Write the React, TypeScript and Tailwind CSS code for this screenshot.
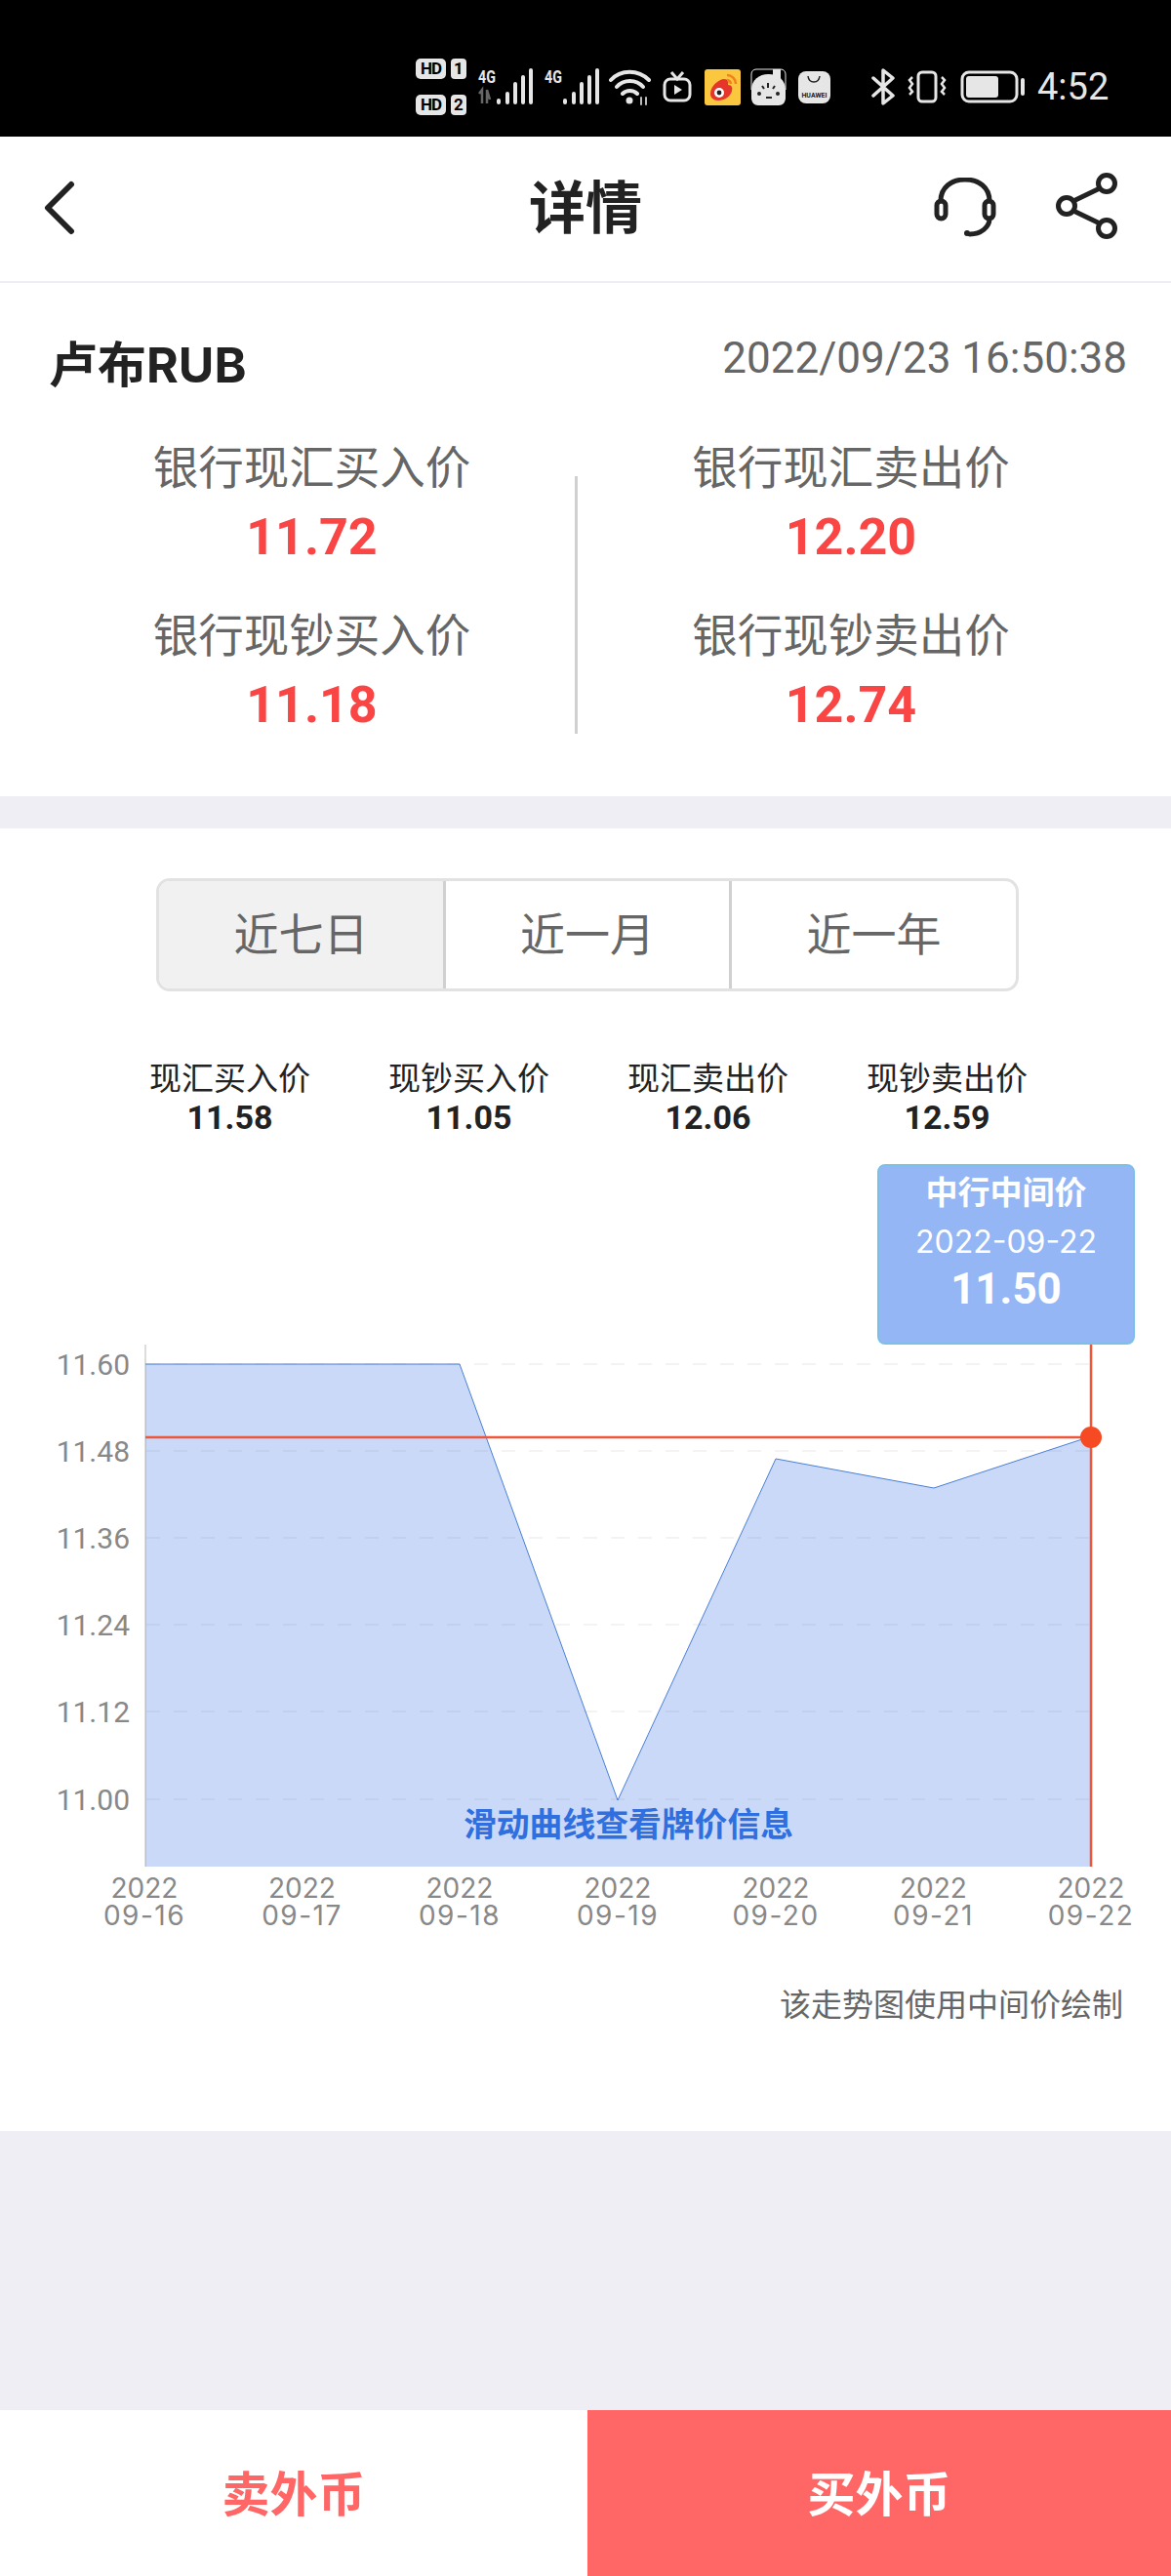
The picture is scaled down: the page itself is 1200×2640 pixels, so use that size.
import React from "react";

const Bars = ({ arrows }: { arrows?: boolean }) => (
  <div className="relative w-[56px] h-[38px]">
    <span className="absolute left-0 top-[1px] text-[19px] leading-[16px] font-bold text-[#e6e6e6] scale-x-75 origin-left">4G</span>
    <svg width="56" height="38" viewBox="0 0 56 38" className="absolute left-0 top-0">
      {arrows && <path d="M4 22v14M1 26l3-4v14M9 36V22l3 10" stroke="#666" strokeWidth="2.500" fill="none" />}
      <g stroke="#e6e6e6" strokeWidth="4" strokeLinecap="round">
        <path d="M21 33v2M30 26v9M38 16v19M46 9v26M54 2v33" />
      </g>
    </svg>
  </div>
);

const Hd = ({ n }: { n: string }) => (
  <div className="flex items-center gap-[5px]">
    <span className="w-[31px] h-[21px] rounded-[5px] bg-[#e6e6e6] text-black text-[17px] leading-[21px] font-bold text-center tracking-[-1px]">HD</span>
    <span className="w-[16px] h-[21px] rounded-[4px] bg-[#e6e6e6] text-black text-[17px] leading-[21px] font-bold text-center">{n}</span>
  </div>
);

const StatusBar = () => (
  <div className="h-[140px] bg-black flex items-center pl-[426px] pt-[38px]">
    <div className="flex flex-col gap-[16px] mr-[11px] w-[53px]">
      <Hd n="1" />
      <Hd n="2" />
    </div>
    <div className="mr-[12px]"><Bars arrows /></div>
    <div className="mr-[10px]"><Bars /></div>
    <svg width="44" height="38" viewBox="0 0 44 38" className="mr-[11px]" fill="none" stroke="#e6e6e6" strokeWidth="4" strokeLinecap="round">
      <path d="M2 12C12 1 30 1 41 12M8 19C15 11 28 11 35 19M14 26c4-4 11-4 15 0" />
      <circle cx="21" cy="33" r="3.500" fill="#e6e6e6" stroke="none" />
      <path d="M33 30v7M38 30v7" strokeWidth="2" stroke="#bbb" />
    </svg>
    <svg width="30" height="32" viewBox="0 0 30 32" className="mr-[13px]" fill="none" stroke="#e6e6e6" strokeWidth="3">
      <path d="M9 1l6 7 6-7" />
      <rect x="2" y="8" width="26" height="22" rx="6" />
      <path d="M12 14l8 5-8 5z" fill="#e6e6e6" stroke="none" />
    </svg>
    <svg width="37" height="37" viewBox="0 0 37 37" className="mr-[10px]">
      <rect width="37" height="37" rx="3" fill="#fbc73f" />
      <path d="M6 25c0-8 9-15 14-15 4 0 5 3 4 6 4 0 5 3 4 6-1 6-8 10-14 10-5 0-8-3-8-7z" fill="#e6352b" />
      <circle cx="15" cy="24" r="5" fill="#fff" />
      <circle cx="15" cy="24" r="2.400" fill="#222" />
      <path d="M23 6c5 0 9 4 9 9M23 11c2 0 4 2 4 4" stroke="#f2811d" strokeWidth="2.500" fill="none" />
    </svg>
    <svg width="37" height="38" viewBox="0 0 37 38" className="mr-[12px]">
      <path d="M1 22c0-10 8-16 17.500-16S36 12 36 22v8c0 5-3 8-7 8H8c-4 0-7-3-7-8z" fill="#e6e6e6" />
      <path d="M1 22V6c0-3 2-5 5-5h25c3 0 5 2 5 5v16" fill="none" stroke="#e6e6e6" strokeWidth="1" />
      <path d="M23 1h8v11l-4-3-4 3z" fill="#e6e6e6" />
      <circle cx="9" cy="26" r="2" fill="#222" />
      <circle cx="28" cy="26" r="2" fill="#222" />
      <path d="M18 15v5M12 18l2 3M25 18l-2 3M16 30h6" stroke="#222" strokeWidth="2" />
    </svg>
    <div className="relative w-[33px] h-[33px] rounded-[8px] bg-[#e6e6e6] mr-[42px] flex items-end justify-center overflow-hidden">
      <svg width="14" height="8" viewBox="0 0 14 8" className="absolute top-[4px] left-[9px]" fill="none" stroke="#222" strokeWidth="1.500"><path d="M1 1c1 8 11 8 12 0" /></svg>
      <span className="text-[7px] leading-[16px] text-[#222] font-bold whitespace-nowrap">HUAWEI</span>
    </div>
    <svg width="24" height="38" viewBox="0 0 24 38" className="mr-[12px]" fill="none" stroke="#e6e6e6" strokeWidth="3.500" strokeLinejoin="round" strokeLinecap="round">
      <path d="M2 10l20 18-10 8V2l10 8L2 28" />
    </svg>
    <svg width="42" height="34" viewBox="0 0 42 34" className="mr-[13px]" fill="none" stroke="#e6e6e6" strokeWidth="3">
      <rect x="12" y="2" width="18" height="30" rx="4" />
      <path d="M6 7l-3 3 3 4-3 4 3 4-3 3M36 7l3 3-3 4 3 4-3 4 3 3" strokeWidth="2.500" />
    </svg>
    <svg width="67" height="34" viewBox="0 0 67 34" className="mr-[12px]" fill="none" stroke="#e6e6e6" strokeWidth="3">
      <rect x="2" y="2" width="56" height="30" rx="7" />
      <rect x="6" y="6" width="33" height="22" rx="3" fill="#e6e6e6" stroke="none" />
      <path d="M64 10v14" strokeWidth="4" strokeLinecap="round" />
    </svg>
    <span className="text-[38px] leading-[40px] text-[#e6e6e6]">4:52</span>
  </div>
);

const Header = () => (
  <div className="relative h-[150px] bg-white border-b-[2px] border-[#eeeef4] flex items-center justify-center">
    <svg width="34" height="56" viewBox="0 0 34 56" className="absolute left-[44px] top-[45px]" fill="none" stroke="#222" strokeWidth="6" strokeLinecap="round" strokeLinejoin="round">
      <path d="M29 4L5 28l24 24" />
    </svg>
    <span className="text-[58px] leading-[70px] font-bold text-[#222]">详情</span>
    <svg width="64" height="62" viewBox="0 0 64 62" className="absolute left-[957px] top-[42px]" fill="none" stroke="#222" strokeWidth="5" strokeLinecap="round">
      <path d="M7 24C7 10 18 2 32 2s25 8 25 22" />
      <rect x="3" y="24" width="9" height="18" rx="4.500" />
      <rect x="52" y="24" width="9" height="18" rx="4.500" />
      <path d="M57 42c0 9-9 16-20 16" />
      <circle cx="34" cy="57" r="3" fill="#222" stroke="none" />
    </svg>
    <svg width="64" height="68" viewBox="0 0 64 68" className="absolute left-[1082px] top-[37px]" fill="none" stroke="#222" strokeWidth="5">
      <circle cx="52" cy="11" r="8.500" />
      <circle cx="52" cy="57" r="8.500" />
      <circle cx="11" cy="34" r="8.500" />
      <path d="M45 16L18 29M18 39l27 13" />
    </svg>
  </div>
);

const Quote = ({ label, value }: { label: string; value: string }) => (
  <div className="flex flex-col items-center">
    <span className="text-[46.500px] leading-[56px] text-[#666]">{label}</span>
    <span className="text-[52px] leading-[60px] font-bold text-[#fa4545] mt-[13px]">{value}</span>
  </div>
);

const Info = () => (
  <div className="h-[526px] bg-white pl-[50px] pr-[45px] pt-[52px]">
    <div className="flex justify-between items-start">
      <span className="text-[50px] leading-[60px] font-bold text-[#222] mt-[2px] font-['Inter','Noto_Sans_CJK_SC',sans-serif]">卢布RUB</span>
      <span className="text-[44px] leading-[50px] text-[#666]">2022/09/23 16:50:38</span>
    </div>
    <div className="flex mt-[84px] h-[264px]">
      <div className="w-[542px] border-r-[3px] border-[#d0d0d0] flex flex-col items-center">
        <div className="-mt-[36px] flex flex-col gap-[43px]">
          <Quote label="银行现汇买入价" value="11.72" />
          <Quote label="银行现钞买入价" value="11.18" />
        </div>
      </div>
      <div className="w-[560px] flex flex-col items-center">
        <div className="-mt-[36px] flex flex-col gap-[43px]">
          <Quote label="银行现汇卖出价" value="12.20" />
          <Quote label="银行现钞卖出价" value="12.74" />
        </div>
      </div>
    </div>
  </div>
);

const Tabs = () => (
  <div className="w-[884px] h-[116px] ml-[160px] border-[3px] border-[#e2e2e2] rounded-[14px] flex overflow-hidden text-[46px] text-[#666]">
    <div className="w-[294px] bg-[#f1f1f1] border-r-[3px] border-[#d0d0d0] flex items-center justify-center">近七日</div>
    <div className="w-[293px] border-r-[3px] border-[#d0d0d0] flex items-center justify-center">近一月</div>
    <div className="flex-1 flex items-center justify-center">近一年</div>
  </div>
);

const stats = [
  ["现汇买入价", "11.58"],
  ["现钞买入价", "11.05"],
  ["现汇卖出价", "12.06"],
  ["现钞卖出价", "12.59"],
];

const yTicks = [
  ["11.60", 208],
  ["11.48", 297],
  ["11.36", 386],
  ["11.24", 475],
  ["11.12", 564],
  ["11.00", 654],
] as const;

const xPts = [148, 309.500, 471, 633, 795, 956.500, 1118];
const xLabels = ["09-16", "09-17", "09-18", "09-19", "09-20", "09-21", "09-22"];

const Chart = () => (
  <div className="relative h-[810px] mt-[26px]">
    <svg width="1200" height="810" viewBox="0 0 1200 810" className="block font-['Roboto','Noto_Sans_CJK_SC',sans-serif]">
      <path d="M149 188V723" stroke="#dcdcdc" strokeWidth="2" />
      {yTicks.map(([t, y]) => (
        <path key={t} d={`M150 ${y}H1118`} stroke="#f0f0f0" strokeWidth="1.500" strokeDasharray="14 14" />
      ))}
      <path d="M149 208H471L633 655L795 305L957 335L1118 282V723H149Z" fill="#4e82e8" fillOpacity="0.3" />
      <path d="M149 208H471L633 655L795 305L957 335L1118 282" fill="none" stroke="#4a7fd8" strokeWidth="1" />
      <path d="M149 283H1118" stroke="#f0563a" strokeWidth="2.500" />
      <path d="M1118 188V723" stroke="#f0563a" strokeWidth="2.500" />
      <circle cx="1118" cy="283" r="11" fill="#f64a22" />
      {yTicks.map(([t, y]) => (
        <text key={t} x="133" y={y + 11} textAnchor="end" fontSize="30" fill="#888">{t}</text>
      ))}
      {xPts.map((x, i) => (
        <g key={x} textAnchor="middle" fontSize="28" fill="#888" fontFamily="Inter">
          <text x={x} y={755}>2022</text>
          <text x={x} y={783} letterSpacing="1.500">{xLabels[i]}</text>
        </g>
      ))}
      <text x="644" y="692" textAnchor="middle" fontSize="33.800" fontWeight="700" fill="#2f6fe0">滑动曲线查看牌价信息</text>
    </svg>
    <div className="absolute left-[899px] top-[3px] w-[264px] h-[185px] bg-[#94b6f5] border-[2px] border-[#7cc0ea] rounded-[8px] flex flex-col items-center text-white">
      <span className="text-[33px] leading-[40px] font-bold mt-[8px]">中行中间价</span>
      <span className="text-[32px] leading-[38px] mt-[11px] font-['Inter',sans-serif]">2022-09-22</span>
      <span className="text-[44px] leading-[50px] font-bold mt-[4px]">11.50</span>
    </div>
  </div>
);

const ChartSection = () => (
  <div className="h-[1335px] bg-white pt-[51px]">
    <Tabs />
    <div className="flex ml-[113px] w-[980px] mt-[70px]">
      {stats.map(([l, v]) => (
        <div key={l} className="w-[245px] flex flex-col items-center">
          <span className="text-[33px] leading-[40px] text-[#222]">{l}</span>
          <span className="text-[34px] leading-[38px] font-bold text-[#222]">{v}</span>
        </div>
      ))}
    </div>
    <Chart />
    <div className="text-right pr-[49px] text-[32px] leading-[40px] text-[#666] mt-[35px]">该走势图使用中间价绘制</div>
  </div>
);

export default function App() {
  return (
    <div className="w-[1200px] h-[2640px] flex flex-col bg-[#eeeef4] overflow-hidden font-['Roboto','Noto_Sans_CJK_SC',sans-serif]">
      <StatusBar />
      <Header />
      <Info />
      <div className="h-[33px]" />
      <ChartSection />
      <div className="flex-1" />
      <div className="h-[170px] flex text-[49px] font-bold">
        <div className="w-[602px] bg-white text-[#ff6666] flex items-center justify-center pt-[6px]">卖外币</div>
        <div className="flex-1 bg-[#ff6666] text-white flex items-center justify-center pt-[6px]">买外币</div>
      </div>
    </div>
  );
}
